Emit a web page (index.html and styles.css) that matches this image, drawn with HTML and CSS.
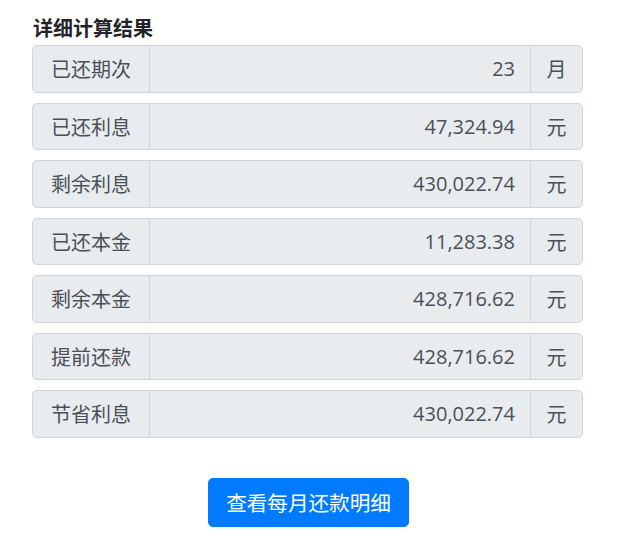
FILE: index.html
```html
<!DOCTYPE html>
<html lang="zh-CN">
<head>
    <meta charset="UTF-8">
    <meta name="viewport" content="width=device-width, initial-scale=1.0">
    <title>详细计算结果</title>
    <link rel="stylesheet" href="styles.css">
</head>
<body>
    <main class="resultado">
        <h2>详细计算结果</h2>

        <div class="grupo">
            <span class="etiqueta">已还期次</span>
            <input class="valor" type="text" value="23" readonly>
            <span class="unidad">月</span>
        </div>
        <div class="grupo">
            <span class="etiqueta">已还利息</span>
            <input class="valor" type="text" value="47,324.94" readonly>
            <span class="unidad">元</span>
        </div>
        <div class="grupo">
            <span class="etiqueta">剩余利息</span>
            <input class="valor" type="text" value="430,022.74" readonly>
            <span class="unidad">元</span>
        </div>
        <div class="grupo">
            <span class="etiqueta">已还本金</span>
            <input class="valor" type="text" value="11,283.38" readonly>
            <span class="unidad">元</span>
        </div>
        <div class="grupo">
            <span class="etiqueta">剩余本金</span>
            <input class="valor" type="text" value="428,716.62" readonly>
            <span class="unidad">元</span>
        </div>
        <div class="grupo">
            <span class="etiqueta">提前还款</span>
            <input class="valor" type="text" value="428,716.62" readonly>
            <span class="unidad">元</span>
        </div>
        <div class="grupo">
            <span class="etiqueta">节省利息</span>
            <input class="valor" type="text" value="430,022.74" readonly>
            <span class="unidad">元</span>
        </div>

        <div class="acciones">
            <button type="button" id="btnDetalle">查看每月还款明细</button>
        </div>
    </main>
</body>
</html>
```

FILE: styles.css
```css
body {
    font-family: "Open Sans", "Noto Sans CJK SC", sans-serif;
    margin: 0;
    padding: 0;
    background-color: #fff;
    color: #212529;
}

.resultado {
    width: 551px;
    margin-left: 32px;
    padding-top: 17px;
}

h2 {
    font-size: 20px;
    font-weight: bold;
    line-height: 24px;
    margin: 0 0 4px 1px;
    color: #212529;
}

.grupo {
    display: flex;
    height: 47.5px;
    margin-bottom: 10px;
}

.etiqueta, .unidad {
    display: flex;
    align-items: center;
    justify-content: center;
    background-color: #e9ecef;
    border: 1px solid #ced4da;
    color: #495057;
    font-size: 20px;
    box-sizing: border-box;
}

.etiqueta {
    width: 118px;
    border-radius: 5px 0 0 5px;
}

.unidad {
    width: 53px;
    border-radius: 0 5px 5px 0;
}

.valor {
    flex: 1;
    min-width: 0;
    margin: 0 -1px;
    padding: 0 15px;
    text-align: right;
    background-color: #e9ecef;
    border: 1px solid #ced4da;
    color: #495057;
    font-family: inherit;
    font-size: 20px;
    box-sizing: border-box;
    outline: none;
}

.acciones {
    display: flex;
    justify-content: center;
    margin-top: 40px;
    padding-left: 2px;
}

button {
    background-color: #007bff;
    color: white;
    border: 1px solid #007bff;
    border-radius: 5px;
    height: 49px;
    padding: 0 17px;
    font-family: inherit;
    font-size: 20.6px;
    cursor: pointer;
}

button:hover {
    background-color: #0069d9;
}
```
